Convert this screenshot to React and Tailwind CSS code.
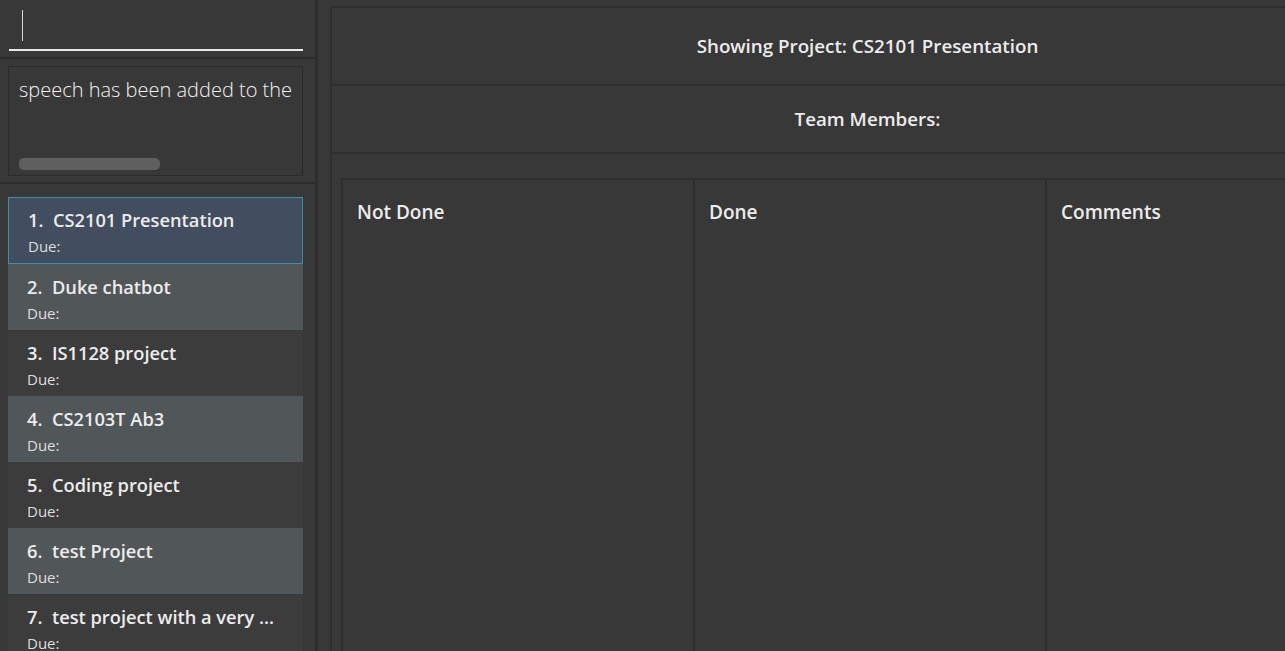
import React from "react";

const projects = [
  "CS2101 Presentation",
  "Duke chatbot",
  "IS1128 project",
  "CS2103T Ab3",
  "Coding project",
  "test Project",
  "test project with a very ...",
];

function ProjectCard({ index, name }) {
  const selected = index === 0;
  const light = index % 2 === 1;
  return (
    <div
      className={`flex shrink-0 flex-col px-[19px] ${
        selected ? "h-[67px] border border-[#3a8fa3] bg-[#424d5f] pt-[9px]" : light ? "h-[66px] bg-[#515658] pt-[10px]" : "h-[66px] bg-[#3c3c3c] pt-[10px]"
      }`}
    >
      <div className="text-[18.25px] font-semibold leading-[26px] text-[#ececec]">
        {index + 1}.&nbsp;&nbsp;{name}
      </div>
      <div className="mt-[4px] text-[15px] leading-[18px] text-[#dedede]">Due:</div>
    </div>
  );
}

export default function App() {
  return (
    <div
      className="flex h-[651px] w-[1285px] overflow-hidden bg-[#383838]"
      style={{ fontFamily: '"Open Sans", "Noto Sans", sans-serif' }}
    >
      {/* left column */}
      <div className="flex w-[315px] shrink-0 flex-col">
        <div className="h-[57px] shrink-0 px-[9px] pt-[10px]">
          <div className="ml-[13px] h-[31px] w-px bg-[#d8d8d8]" />
          <div className="mt-[8px] h-[2px] w-[294px] bg-[#e8e8e8]" />
        </div>
        <div className="h-[2px] shrink-0 bg-[#2c2c2c]" />
        <div className="h-[123px] shrink-0 px-[8px] pt-[7px]">
          <div className="flex h-[110px] w-[295px] flex-col overflow-hidden border border-[#2b2b2b] px-[10px]">
            <div className="mt-[10px] whitespace-nowrap text-[20px] font-light leading-[26px] text-[#f2f2f2]">
              speech has been added to the
            </div>
            <div className="mt-auto mb-[5px] h-[12px] w-[141px] rounded-[5px] bg-[#5f5f5f]" />
          </div>
        </div>
        <div className="h-[2px] shrink-0 bg-[#2c2c2c]" />
        <div className="flex w-[295px] flex-col pl-[8px] pt-[13px] box-content">
          {projects.map((p, i) => (
            <ProjectCard key={p} index={i} name={p} />
          ))}
        </div>
      </div>

      <div className="w-[3px] shrink-0 bg-[#2d2d2d]" />

      {/* main area */}
      <div className="min-w-0 flex-1 overflow-hidden">
        <div className="w-[1087px] pl-[12px] pt-[6px]">
          <div className="flex h-[80px] items-center justify-center border-2 border-[#2f2f2f] text-[18.75px] font-semibold text-[#ececec]">
            Showing Project: CS2101 Presentation
          </div>
          <div className="flex h-[68px] items-center justify-center border-x-2 border-b-2 border-[#2f2f2f] text-[18.75px] font-semibold text-[#ececec]">
            Team Members:
          </div>
          <div className="h-[520px] border-x-2 border-[#2f2f2f] pl-[10px] pt-[24px]">
            <div className="-ml-px flex h-full border-l-2 border-t-2 border-[#2f2f2f]">
              {["Not Done", "Done", "Comments"].map((c) => (
                <div
                  key={c}
                  className="w-[352px] shrink-0 border-r-2 border-[#2f2f2f] px-[14px] pt-[19px] text-[19px] font-semibold leading-[26px] text-[#ececec]"
                >
                  {c}
                </div>
              ))}
            </div>
          </div>
        </div>
      </div>
    </div>
  );
}
